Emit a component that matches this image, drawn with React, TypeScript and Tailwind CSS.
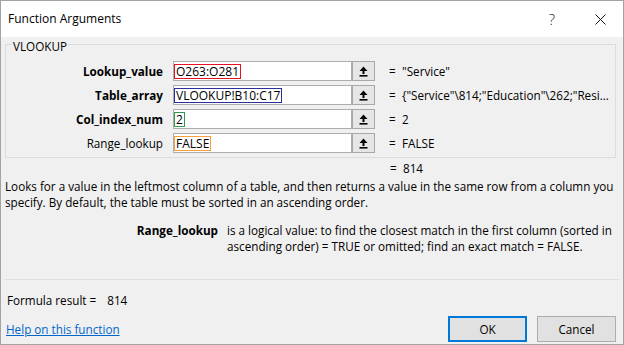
import React from "react";

type Arg = {
  label: string;
  bold: boolean;
  ref: string;
  refBorder: string;
  value: string;
};

const args: Arg[] = [
  { label: "Lookup_value", bold: true, ref: "O263:O281", refBorder: "border-[#e81123]", value: "\"Service\"" },
  { label: "Table_array", bold: true, ref: "VLOOKUP!B10:C17", refBorder: "border-[#2a2f9c]", value: "{\"Service\"\\814;\"Education\"\\262;\"Resi..." },
  { label: "Col_index_num", bold: true, ref: "2", refBorder: "border-[#2e9a4a]", value: "2" },
  { label: "Range_lookup", bold: false, ref: "FALSE", refBorder: "border-[#f5a03a]", value: "FALSE" },
];

function CollapseIcon() {
  return (
    <svg width="9" height="11" viewBox="0 0 9 11" fill="none">
      <path d="M4.5 0.5 L0.5 5 H3.5 V8 H5.5 V5 H8.5 Z" fill="#000" />
      <rect x="0.5" y="9" width="8" height="1.6" fill="#000" />
    </svg>
  );
}

export default function App() {
  return (
    <div
      className="w-[624px] h-[345px] border border-[#a3a3a3] bg-[#f0f0f0] text-[11.7px] leading-[16px] text-black overflow-hidden"
      style={{ fontFamily: '"Open Sans", "Noto Sans", sans-serif' }}
    >
      {/* title bar */}
      <div className="h-[36px] bg-white flex items-center pl-[7px] pr-[17px]">
        <span className="text-[12px]">Function Arguments</span>
        <span className="ml-auto text-[15px] font-light text-[#222]">?</span>
        <svg className="ml-[40px]" width="11" height="11" viewBox="0 0 11 11">
          <path d="M0.5 0.5 L10.5 10.5 M10.5 0.5 L0.5 10.5" stroke="#111" strokeWidth="1" />
        </svg>
      </div>

      <div className="px-[4px]">
        {/* argument group */}
        <div className="mt-[7px] mr-[3px] border border-[#dcdcdc] pb-[4px]">
          <div className="-mt-[7px] ml-[6px] w-fit bg-[#f0f0f0] px-[1px]">VLOOKUP</div>
          <div className="mt-[7px] flex flex-col gap-[4px]">
            {args.map((a) => (
              <div key={a.label} className="flex items-center h-[20px]">
                <div className={`w-[157px] text-right whitespace-nowrap ${a.bold ? "font-bold" : ""}`}>
                  {a.label}
                </div>
                <div className="ml-[10px] w-[179px] h-[20px] border border-[#adadad] bg-white flex items-center">
                  <span className={`h-[15px] border ${a.refBorder} px-[1px] leading-[13px] text-[12px] whitespace-nowrap`}>
                    {a.ref}
                  </span>
                </div>
                <div className="w-[23px] h-[20px] border border-[#a8a8a8] bg-[#e6e6e6] flex items-center justify-center">
                  <CollapseIcon />
                </div>
                <span className="ml-[14px] w-[13px]">=</span>
                <span className="whitespace-nowrap">{a.value}</span>
              </div>
            ))}
          </div>
        </div>

        <div className="mt-[2px] pl-[385px] flex">
          <span className="w-[13px]">=</span>
          <span>814</span>
        </div>

        <div className="mt-[2px] leading-[16px] whitespace-nowrap">
          <div>Looks for a value in the leftmost column of a table, and then returns a value in the same row from a column you</div>
          <div>specify. By default, the table must be sorted in an ascending order.</div>
        </div>

        <div className="mt-[12px] flex leading-[16px]">
          <div className="w-[213px] text-right font-bold">Range_lookup</div>
          <div className="ml-[9px] whitespace-nowrap">
            <div>is a logical value: to find the closest match in the first column (sorted in</div>
            <div>ascending order) = TRUE or omitted; find an exact match = FALSE.</div>
          </div>
        </div>

        <div className="mt-[25px] border-t border-[#dfdfdf]" />

        <div className="mt-[12px] pl-[2px] flex">
          <span>Formula result =</span>
          <span className="ml-[11px]">814</span>
        </div>

        <div className="mt-[8px] flex items-center">
          <a href="#" className="ml-[1px] text-[#0066cc] underline">Help on this function</a>
          <button className="ml-auto w-[79px] h-[26px] border-2 border-[#0078d7] bg-[#e1e1e1]">OK</button>
          <button className="ml-[10px] mr-[3px] w-[79px] h-[26px] border border-[#adadad] bg-[#e1e1e1]">Cancel</button>
        </div>
      </div>
    </div>
  );
}
